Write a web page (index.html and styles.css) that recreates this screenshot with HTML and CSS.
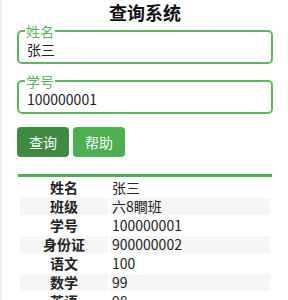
FILE: index.html
```
<!DOCTYPE html>
<html lang="zh">
<head>
  <meta charset="UTF-8">
  <meta name="viewport" content="width=device-width, initial-scale=1.0">
  <title>查询系统</title>
  <link rel="stylesheet" href="styles.css">
</head>
<body>
  <div class="page">
    <h1 class="title">查询系统</h1>

    <fieldset class="field">
      <legend>姓名</legend>
      <input class="field-input" type="text" value="张三">
    </fieldset>

    <fieldset class="field">
      <legend>学号</legend>
      <input class="field-input" type="text" value="100000001">
    </fieldset>

    <div class="actions">
      <button class="btn btn-query">查询</button>
      <button class="btn btn-help">帮助</button>
    </div>

    <table class="result">
      <tr><th>姓名</th><td>张三</td></tr>
      <tr><th>班级</th><td>六8瞷班</td></tr>
      <tr><th>学号</th><td>100000001</td></tr>
      <tr><th>身份证</th><td>900000002</td></tr>
      <tr><th>语文</th><td>100</td></tr>
      <tr><th>数学</th><td>99</td></tr>
      <tr><th>英语</th><td>98</td></tr>
    </table>
  </div>
</body>
</html>
```

FILE: styles.css
```
* {
  box-sizing: border-box;
}

html, body {
  margin: 0;
  padding: 0;
  font-family: "Noto Sans CJK SC", "Noto Sans", sans-serif;
  color: #222;
  background: #fff;
}

body {
  border-left: 2px solid #eee;
}

.page {
  padding: 0 15px;
}

.title {
  margin: 0;
  font-size: 18px;
  line-height: 24px;
  text-align: center;
  color: #111;
}

.field {
  margin: 0 0 10px 0;
  padding: 0 8px 2px 8px;
  border: 2px solid #5cb85c;
  border-radius: 5px;
}

.field legend {
  padding: 0 1px;
  margin-left: -2px;
  font-size: 14px;
  line-height: 14px;
  color: #5cb85c;
}

.field-input {
  display: block;
  width: 100%;
  height: 22px;
  border: none;
  outline: none;
  padding: 0 0 1px 0;
  font-family: inherit;
  font-size: 14px;
  color: #222;
  background: transparent;
}

.actions {
  display: flex;
  gap: 4px;
  margin-top: 13px;
}

.btn {
  height: 30px;
  padding: 0 12px;
  border: none;
  border-radius: 4px;
  font-family: inherit;
  font-size: 14px;
  color: #fff;
  cursor: pointer;
}

.btn-query {
  background: #3d8b40;
}

.btn-help {
  background: #4caf50;
}

.result {
  width: 254px;
  margin: 17px 0 0 1px;
  border-top: 3px solid #4caf50;
  border-spacing: 2px;
  font-size: 14px;
}

.result th,
.result td {
  height: 17px;
  padding: 0;
  line-height: 17px;
}

.result th {
  width: 88px;
  text-align: center;
  font-weight: bold;
}

.result td {
  padding-left: 2px;
  text-align: left;
}

.result tr:nth-child(even) th,
.result tr:nth-child(even) td {
  background: #f6f6f6;
}
```
